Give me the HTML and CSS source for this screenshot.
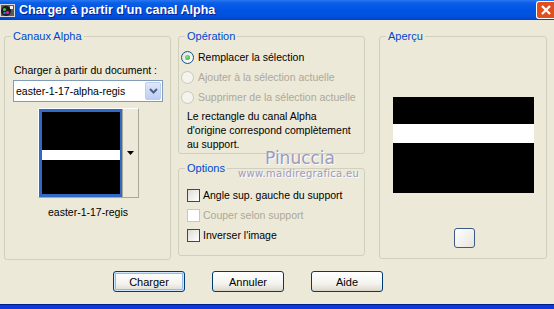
FILE: index.html
```html
<!DOCTYPE html>
<html lang="fr">
<head>
<meta charset="UTF-8" />
<title>Charger à partir d'un canal Alpha</title>
<link rel="stylesheet" href="styles.css">
</head>
<body>
<div class="window">
  <div class="titlebar">
    <svg class="app-icon" width="15" height="15" viewBox="0 0 15 15">
      <rect x="0.5" y="1.5" width="14" height="12" fill="#5a5a5a" stroke="#d8d8d8"/>
      <circle cx="6" cy="8" r="5" fill="#1b1b1b"/>
      <circle cx="4.5" cy="6.5" r="1.6" fill="#3fbf3f"/>
      <circle cx="7.5" cy="9.5" r="1.6" fill="#d0309a"/>
      <circle cx="4.5" cy="10" r="1.3" fill="#3070e0"/>
      <rect x="10" y="3" width="3" height="3" fill="#f0f0f0"/>
    </svg>
    <span class="title">Charger à partir d'un canal Alpha</span>
    <span class="close">
      <svg width="10" height="10" viewBox="0 0 10 10"><path d="M1 1 L9 9 M9 1 L1 9" stroke="#ffffff" stroke-width="2.2"/></svg>
    </span>
  </div>

  <div class="content">
    <div class="groups">
      <fieldset class="group canaux">
        <legend>Canaux Alpha</legend>
        <div class="field-label">Charger à partir du document :</div>
        <div class="select">
          <span class="select-value">easter-1-17-alpha-regis</span>
          <span class="select-btn">
            <svg width="9" height="6" viewBox="0 0 9 6"><path d="M1 1 L4.5 4.5 L8 1" fill="none" stroke="#4d6185" stroke-width="2"/></svg>
          </span>
        </div>
        <div class="thumb">
          <div class="thumb-sel"><div class="thumb-img"><div class="stripe"></div></div></div>
          <div class="thumb-drop">
            <svg width="7" height="4" viewBox="0 0 7 4"><path d="M0 0 H7 L3.5 4 Z" fill="#000"/></svg>
          </div>
        </div>
        <div class="thumb-name">easter-1-17-regis</div>
      </fieldset>

      <div class="middle">
        <fieldset class="group operation">
          <legend>Opération</legend>
          <div class="rows radios">
            <div class="row"><span class="radio checked"></span>Remplacer la sélection</div>
            <div class="row disabled"><span class="radio"></span>Ajouter à la sélection actuelle</div>
            <div class="row disabled"><span class="radio"></span>Supprimer de la sélection actuelle</div>
          </div>
          <p class="note">Le rectangle du canal Alpha<br>d'origine correspond complètement<br>au support.</p>
        </fieldset>
        <fieldset class="group options">
          <legend>Options</legend>
          <div class="rows checks">
            <div class="row"><span class="check"></span>Angle sup. gauche du support</div>
            <div class="row disabled"><span class="check"></span>Couper selon support</div>
            <div class="row"><span class="check"></span>Inverser l'image</div>
          </div>
        </fieldset>
      </div>

      <fieldset class="group apercu">
        <legend>Aperçu</legend>
        <div class="preview"><div class="preview-stripe"></div></div>
        <span class="mini-btn"></span>
      </fieldset>
    </div>

    <div class="buttons">
      <button class="btn default">Charger</button>
      <button class="btn">Annuler</button>
      <button class="btn">Aide</button>
    </div>
  </div>

  <div class="taskbar"></div>

  <div class="watermark">
    <div class="wm-name">Pinuccia</div>
    <div class="wm-url">www.maidiregrafica.eu</div>
  </div>
</div>
</body>
</html>
```

FILE: styles.css
```css
body {
  margin: 0;
  font-family: "Liberation Sans", Arial, sans-serif;
  font-size: 10.5px;
  color: #000;
  background: #ece9d8;
}
.window {
  position: relative;
  width: 554px;
  height: 309px;
  display: flex;
  flex-direction: column;
  background: #ece9d8;
  overflow: hidden;
}

/* title bar */
.titlebar {
  height: 20px;
  display: flex;
  align-items: center;
  background: linear-gradient(#2a78f0 0%, #0a5ee6 15%, #0054e3 50%, #0050dc 85%, #0041c8 100%);
}
.app-icon {
  margin: 0 4px 0 0;
  flex-shrink: 0;
}
.title {
  color: #fff;
  font-weight: 700;
  font-size: 12.5px;
  text-shadow: 1px 1px 0 #0a1e8c;
  flex: 1;
  white-space: nowrap;
}
.close {
  flex-shrink: 0;
  width: 18px;
  height: 18px;
  margin-top: -1px;
  box-sizing: border-box;
  border: 1px solid #ffffff;
  border-right: 0;
  border-radius: 3px 0 0 3px;
  background: #e0501f;
  display: flex;
  align-items: center;
  justify-content: center;
}

/* content */
.content {
  padding: 9px 0 0 4px;
}
.groups {
  display: flex;
  align-items: flex-start;
}
.group {
  margin: 0;
  padding: 0 8px;
  min-width: 0;
  box-sizing: border-box;
  border: 1px solid #d0d0bf;
  border-radius: 3px;
}
.group legend {
  padding: 0 2px;
  margin-left: -2px;
  color: #0046d5;
  font-size: 11px;
  line-height: 14px;
}
.canaux {
  width: 167px;
  height: 231px;
}
.middle {
  margin-left: 7px;
  width: 187px;
  display: flex;
  flex-direction: column;
  gap: 7px;
}
.operation {
  height: 125px;
}
.options {
  height: 95px;
}
.apercu {
  margin-left: 14px;
  width: 168px;
  height: 230px;
  display: flex;
  flex-direction: column;
  align-items: center;
}

/* canaux alpha */
.field-label {
  margin-top: 21px;
  line-height: 13px;
  padding-left: 1px;
  white-space: nowrap;
}
.select {
  margin-top: 3px;
  width: 150px;
  height: 22px;
  box-sizing: border-box;
  border: 1px solid #7f9db9;
  background: #fff;
  display: flex;
  align-items: center;
  padding: 0 1px 0 2px;
}
.select-value {
  flex: 1;
}
.select-btn {
  width: 16px;
  height: 18px;
  box-sizing: border-box;
  border: 1px solid #bccdf0;
  border-radius: 2px;
  background: linear-gradient(#dfe8fb, #bccef5);
  display: flex;
  align-items: center;
  justify-content: center;
}
.thumb {
  margin: 6px 0 0 25px;
  width: 101px;
  height: 90px;
  box-sizing: border-box;
  border: 1px solid;
  border-color: #fff #aca899 #aca899 #fff;
  display: flex;
}
.thumb-sel {
  width: 83px;
  box-sizing: border-box;
  border: 3px solid #316ac5;
  border-right-width: 2px;
  background: #000;
}
.thumb-img {
  height: 100%;
  background: #000;
  overflow: hidden;
}
.stripe {
  height: 10px;
  margin-top: 38px;
  background: #fff;
}
.thumb-drop {
  flex: 1;
  border-left: 1px solid #aca899;
  display: flex;
  align-items: center;
  justify-content: center;
}
.thumb-name {
  margin-top: 8px;
  line-height: 13px;
  text-align: center;
  padding-left: 1px;
}

/* radios and checks */
.rows {
  display: flex;
  flex-direction: column;
  white-space: nowrap;
}
.radios {
  margin: 4px -8px 0 -6px;
}
.checks {
  margin-top: 10px;
}
.row {
  height: 20px;
  display: flex;
  align-items: center;
  gap: 3px;
}
.radios .row {
  gap: 4px;
}
.row.disabled {
  color: #aca899;
}
.radio {
  width: 13px;
  height: 13px;
  box-sizing: border-box;
  border: 1px solid #1c5180;
  border-radius: 50%;
  background: radial-gradient(circle at 70% 70%, #fff, #dcdcd7);
  display: flex;
  align-items: center;
  justify-content: center;
}
.radio.checked::after {
  content: "";
  width: 5px;
  height: 5px;
  border-radius: 50%;
  background: radial-gradient(circle at 40% 40%, #8be88b, #21a121);
}
.disabled .radio {
  border-color: #cac8bb;
  background: #f4f3ee;
}
.check {
  width: 13px;
  height: 13px;
  box-sizing: border-box;
  border: 1px solid #1c5180;
  background: linear-gradient(135deg, #dcdcd7, #fff);
}
.disabled .check {
  border-color: #cac8bb;
  background: #fff;
}
.note {
  margin: 2px -8px 0 0;
  line-height: 14px;
  white-space: nowrap;
}

/* apercu */
.preview {
  margin-top: 54px;
  width: 141px;
  height: 96px;
  background: #000;
  display: flex;
  flex-direction: column;
}
.preview-stripe {
  margin-top: 27px;
  height: 19px;
  background: #fff;
}
.mini-btn {
  margin: 35px 0 0 3px;
  width: 21px;
  height: 20px;
  box-sizing: border-box;
  border: 1px solid #3c5a88;
  border-radius: 3px;
  background: linear-gradient(135deg, #fff, #e6e4dc);
}

/* buttons */
.buttons {
  margin: 11px 0 0 109px;
  display: flex;
  gap: 27px;
}
.btn {
  width: 72px;
  height: 21px;
  padding: 0;
  font-family: inherit;
  font-size: 11px;
  color: #000;
  border: 1px solid #003c74;
  border-radius: 3px;
  background: linear-gradient(#fff 0%, #f4f3ee 60%, #e3e0d5 90%, #d6d0c5 100%);
}
.btn.default {
  box-shadow: inset 0 0 0 1px #cee7ff, inset 0 0 0 2px #98b8ea;
}

/* bottom edge */
.taskbar {
  margin-top: auto;
  height: 4px;
  border-top: 1px solid #001f8c;
  background: #0a3adb;
}

/* watermark over the dialog */
.watermark {
  position: absolute;
  left: 238px;
  top: 148px;
  width: 120px;
  text-align: center;
  color: #9a9abf;
  pointer-events: none;
}
.wm-name {
  font-family: "DejaVu Sans", sans-serif;
  font-size: 17px;
  line-height: 20px;
  padding-left: 4px;
  text-shadow: 1px 1px 0 #fff;
}
.wm-url {
  font-family: "DejaVu Sans", sans-serif;
  font-size: 10px;
  line-height: 12px;
  letter-spacing: 0.3px;
  text-shadow: 1px 1px 0 #fff;
}
```
